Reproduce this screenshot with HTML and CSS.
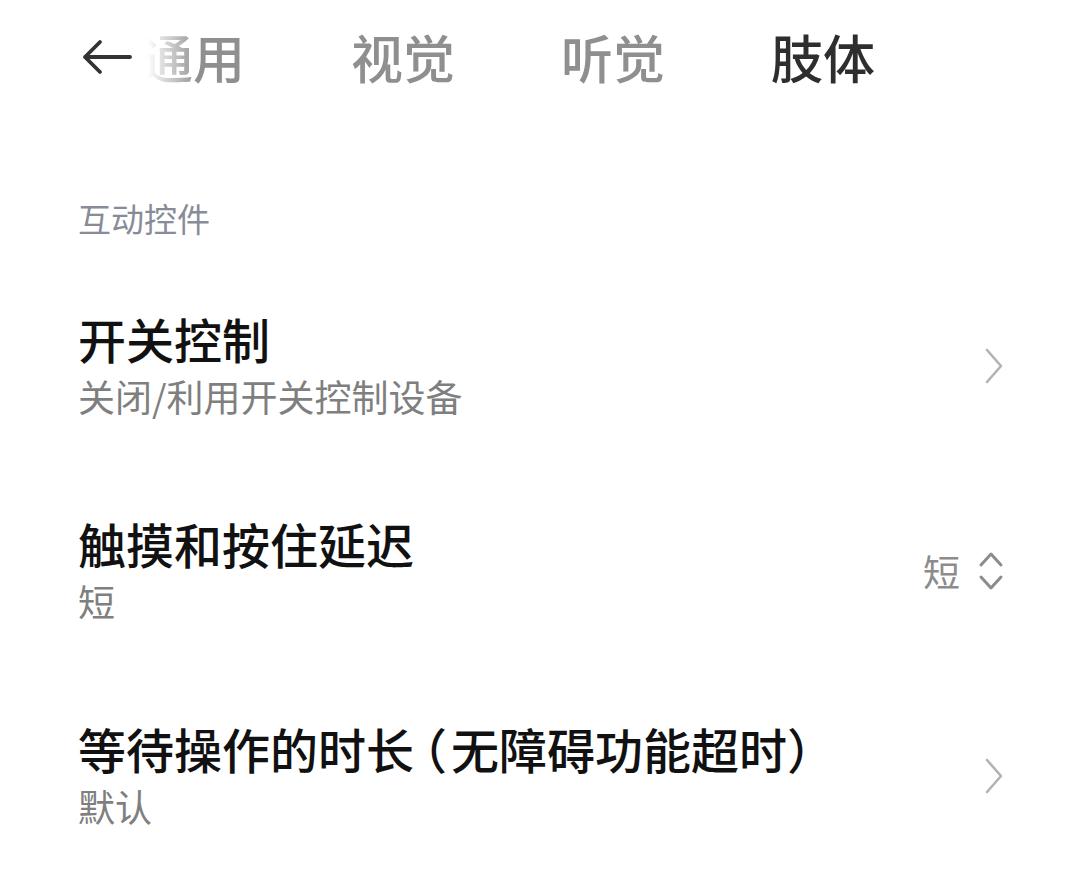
FILE: index.html
```html
<!DOCTYPE html>
<html lang="zh-CN">
<head>
<meta charset="utf-8">
<title>肢体</title>
<link rel="stylesheet" href="styles.css">
</head>
<body>
<div class="page">
  <header class="header">
    <svg class="back" width="52" height="36" viewBox="0 0 52 36">
      <path d="M4 18 H49 M19 3 L4 18 L19 33" fill="none" stroke="#333" stroke-width="3.8" stroke-linecap="round" stroke-linejoin="round"/>
    </svg>
    <nav class="tabs">
      <span class="tab">通用</span>
      <span class="tab">视觉</span>
      <span class="tab">听觉</span>
      <span class="tab active">肢体</span>
    </nav>
  </header>

  <div class="section-title">互动控件</div>

  <div class="list">
    <div class="row">
      <div class="texts">
        <div class="title">开关控制</div>
        <div class="sub">关闭/利用开关控制设备</div>
      </div>
      <svg class="chev" width="20" height="36" viewBox="0 0 20 36">
        <path d="M3 2 L17 18 L3 34" fill="none" stroke="#b3b3b3" stroke-width="2.6" stroke-linecap="round" stroke-linejoin="round"/>
      </svg>
    </div>
    <div class="row">
      <div class="texts">
        <div class="title">触摸和按住延迟</div>
        <div class="sub">短</div>
      </div>
      <div class="value">
        <span>短</span>
        <svg class="updown" width="26" height="40" viewBox="0 0 26 40">
          <path d="M3 14 L13 3 L23 14 M3 26 L13 37 L23 26" fill="none" stroke="#8c8c8c" stroke-width="3" stroke-linecap="round" stroke-linejoin="round"/>
        </svg>
      </div>
    </div>
    <div class="row">
      <div class="texts">
        <div class="title">等待操作的时长<span class="paren-open">（</span>无障碍功能超时）</div>
        <div class="sub">默认</div>
      </div>
      <svg class="chev" width="20" height="36" viewBox="0 0 20 36">
        <path d="M3 2 L17 18 L3 34" fill="none" stroke="#b3b3b3" stroke-width="2.6" stroke-linecap="round" stroke-linejoin="round"/>
      </svg>
    </div>
  </div>
</div>
</body>
</html>
```

FILE: styles.css
```css
html, body {
  margin: 0;
  padding: 0;
  background: #ffffff;
}

body {
  font-family: "Noto Sans CJK SC", "Noto Sans", sans-serif;
  width: 1080px;
  height: 875px;
  overflow: hidden;
}

.header {
  height: 114px;
  display: flex;
  align-items: center;
  padding-left: 81px;
  box-sizing: border-box;
}

.back {
  flex: none;
  display: block;
}

.tabs {
  display: flex;
  gap: 106px;
  margin-left: 8px;
  font-size: 52px;
  line-height: 70px;
  font-weight: 500;
  -webkit-mask-image: linear-gradient(to right, transparent 0, transparent 6px, #000 58px);
  mask-image: linear-gradient(to right, transparent 0, transparent 6px, #000 58px);
}

.tab {
  color: #8f8f8f;
  white-space: nowrap;
}

.tab.active {
  color: #2e2e2e;
}

.section-title {
  padding: 82px 78px 0;
  font-size: 33px;
  line-height: 44px;
  color: #878c98;
}

.list {
  display: flex;
  flex-direction: column;
  margin-top: 23px;
}

.row {
  display: flex;
  align-items: center;
  justify-content: space-between;
  padding: 45px 76px 44px 78px;
}

.texts {
  display: flex;
  flex-direction: column;
}

.title {
  font-size: 48px;
  line-height: 60px;
  font-weight: 500;
  color: #111111;
  white-space: nowrap;
}

.paren-open {
  font-feature-settings: "halt" 1;
  padding-left: 9px;
  padding-right: 4px;
}

.sub {
  font-size: 37px;
  line-height: 56px;
  color: #7f7f7f;
}

.chev {
  display: block;
  flex: none;
}

.value {
  display: flex;
  align-items: center;
  gap: 18px;
  font-size: 37px;
  line-height: 50px;
  color: #8c8c8c;
}

.updown {
  display: block;
}
```
